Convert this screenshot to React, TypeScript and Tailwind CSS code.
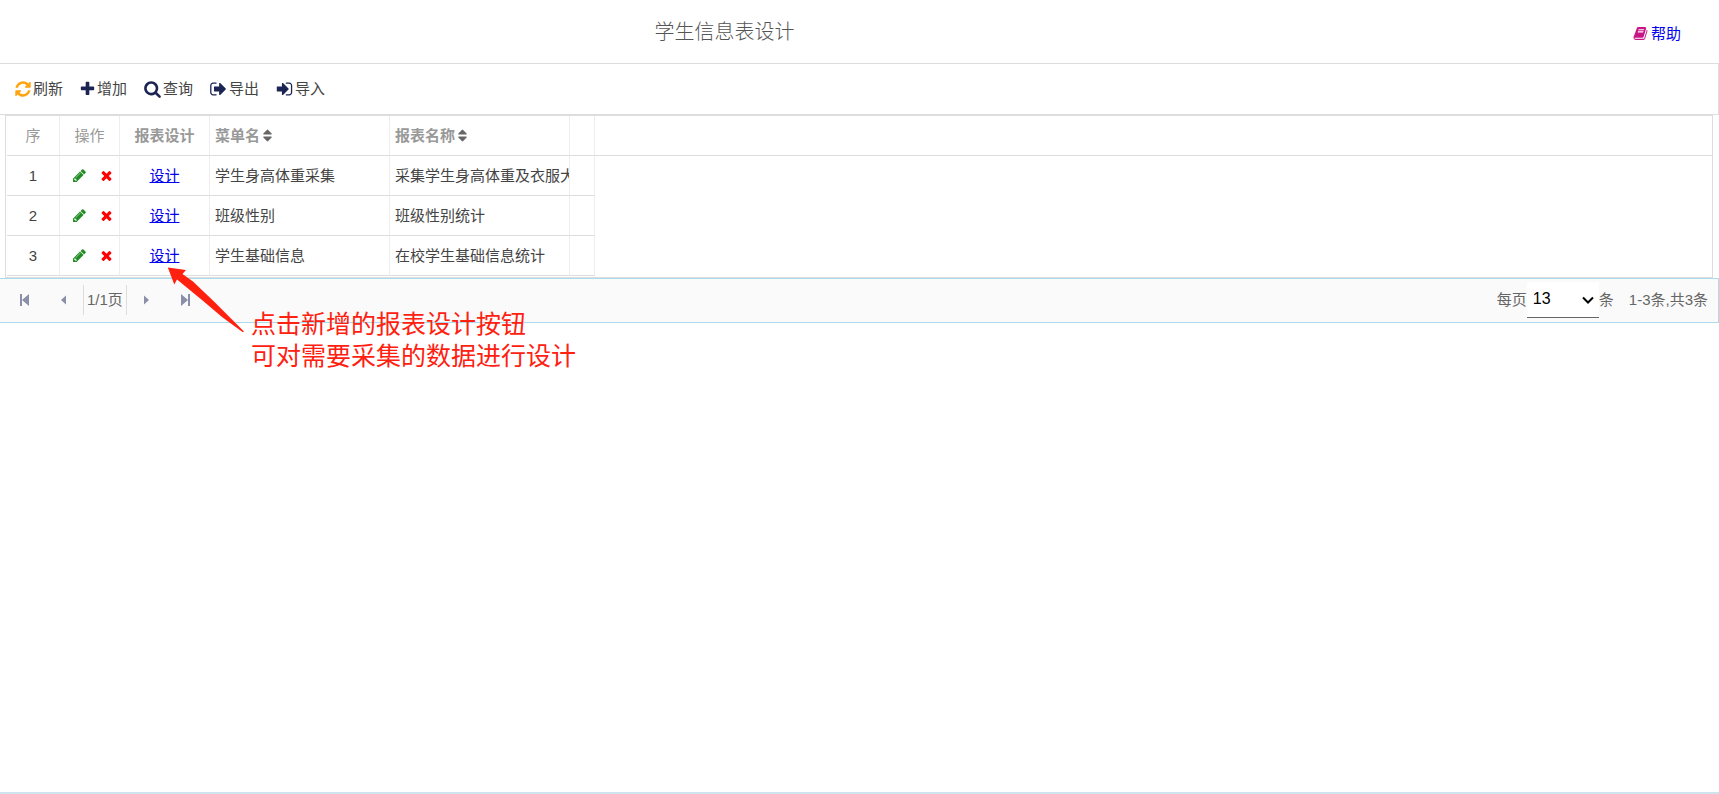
import React, { useState } from 'react';

const icons = {
  refresh:
    'M1639 1056q0 5-1 7-64 268-268 434.5t-478 166.5q-146 0-282.5-55t-243.5-157l-129 129q-19 19-45 19t-45-19-19-45v-448q0-26 19-45t45-19h448q26 0 45 19t19 45-19 45l-137 137q71 66 161 102t187 36q134 0 250-65t186-179q11-17 53-117 8-23 30-23h192q13 0 22.5 9.5t9.5 22.5zm25-800v448q0 26-19 45t-45 19h-448q-26 0-45-19t-19-45 19-45l138-138q-148-137-349-137-134 0-250 65t-186 179q-11 17-53 117-8 23-30 23h-199q-13 0-22.5-9.5t-9.5-22.5v-7q65-268 270-434.5t480-166.5q146 0 284 55.5t245 156.5l130-129q19-19 45-19t45 19 19 45z',
  plus: 'M1600 736v192q0 40-28 68t-68 28h-416v416q0 40-28 68t-68 28h-192q-40 0-68-28t-28-68v-416h-416q-40 0-68-28t-28-68v-192q0-40 28-68t68-28h416v-416q0-40 28-68t68-28h192q40 0 68 28t28 68v416h416q40 0 68 28t28 68z',
  search:
    'M1216 832q0-185-131.5-316.5t-316.5-131.5-316.5 131.5-131.5 316.5 131.5 316.5 316.5 131.5 316.5-131.5 131.5-316.5zm512 832q0 52-38 90t-90 38q-54 0-90-38l-343-342q-179 124-399 124-143 0-273.5-55.5t-225-150-150-225-55.5-273.5 55.5-273.5 150-225 225-150 273.5-55.5 273.5 55.5 225 150 150 225 55.5 273.5q0 220-124 399l343 343q37 37 37 90z',
  signOut:
    'M704 1440q0 4 1 20t.5 26.5-3 23.5-10 19.5-20.5 6.5h-320q-119 0-203.5-84.5t-84.5-203.5v-704q0-119 84.5-203.5t203.5-84.5h320q13 0 22.5 9.5t9.5 22.5q0 4 1 20t.5 26.5-3 23.5-10 19.5-20.5 6.5h-320q-66 0-113 47t-47 113v704q0 66 47 113t113 47h312l11.5 1 11.5 3 8 5.5 7 9 2 13.5zm928-544q0 26-19 45l-544 544q-19 19-45 19t-45-19-19-45v-288h-448q-26 0-45-19t-19-45v-384q0-26 19-45t45-19h448v-288q0-26 19-45t45-19 45 19l544 544q19 19 19 45z',
  signIn:
    'M1312 896q0 26-19 45l-544 544q-19 19-45 19t-45-19-19-45v-288h-448q-26 0-45-19t-19-45v-384q0-26 19-45t45-19h448v-288q0-26 19-45t45-19 45 19l544 544q19 19 19 45zm352-352v704q0 119-84.5 203.5t-203.5 84.5h-320q-13 0-22.5-9.5t-9.5-22.5q0-4-1-20t-.5-26.5 3-23.5 10-19.5 20.5-6.5h320q66 0 113-47t47-113v-704q0-66-47-113t-113-47h-312l-11.5-1-11.5-3-8-5.5-7-9-2-13.5q0-4-1-20t-.5-26.5 3-23.5 10-19.5 20.5-6.5h320q119 0 203.5 84.5t84.5 203.5z',
  pencil:
    'M491 1536l91-91-235-235-91 91v107h128v128h107zm523-928q0-22-22-22-10 0-17 7l-542 542q-7 7-7 17 0 22 22 22 10 0 17-7l542-542q7-7 7-17zm-54-192l416 416-832 832h-416v-416zm683 96q0 53-37 90l-166 166-416-416 166-165q36-38 90-38 53 0 91 38l235 234q37 39 37 91z',
  times:
    'M1490 1322q0 40-28 68l-136 136q-28 28-68 28t-68-28l-294-294-294 294q-28 28-68 28t-68-28l-136-136q-28-28-28-68t28-68l294-294-294-294q-28-28-28-68t28-68l136-136q28-28 68-28t68 28l294 294 294-294q28-28 68-28t68 28l136 136q28 28 28 68t-28 68l-294 294 294 294q28 28 28 68z',
  sort: 'M1408 1088q0 26-19 45l-448 448q-19 19-45 19t-45-19l-448-448q-19-19-19-45t19-45 45-19h896q26 0 45 19t19 45zm0-384q0 26-19 45t-45 19h-896q-26 0-45-19t-19-45 19-45l448-448q19-19 45-19t45 19l448 448q19 19 19 45z',
  book: 'M1703 478q40 57 18 129l-275 906q-19 64-76.5 107.5t-122.5 43.5h-923q-77 0-148.5-53.5t-99.5-131.5q-24-67-2-127 0-4 3-27t4-37q1-8-3-21.5t-3-19.5q2-11 8-21t16.5-23.5 16.5-23.5q23-38 45-91.5t30-91.5q3-10 .5-30t-.5-28q3-11 17-28t17-23q21-36 42-92t25-90q1-9-2.5-32t.5-28q4-13 22-30.5t22-22.5q19-26 42.5-84.5t27.5-96.5q1-8-3-25.5t-2-26.5q2-8 9-18t18-23 17-21q8-12 16.5-30.5t15-35 16-36 19.5-32 26.5-23.5 36-11.5 47.5 5.5l-1 3q38-9 51-9h761q74 0 114 56t18 130l-274 906q-36 119-71.5 153.5t-128.5 34.5h-869q-27 0-38 15-11 16-1 43 24 70 144 70h923q29 0 56-15.5t35-41.5l300-987q7-22 5-57 38 15 59 43zm-1064 2q-4 13 2 22.5t20 9.5h608q13 0 25.5-9.5t16.5-22.5l21-64q4-13-2-22.5t-20-9.5h-608q-13 0-25.5 9.5t-16.5 22.5zm-83 256q-4 13 2 22.5t20 9.5h608q13 0 25.5-9.5t16.5-22.5l21-64q4-13-2-22.5t-20-9.5h-608q-13 0-25.5 9.5t-16.5 22.5z',
};

type IconName = keyof typeof icons;

function Icon({ name, className = '' }: { name: IconName; className?: string }) {
  return (
    <svg viewBox="0 0 1792 1792" fill="currentColor" aria-hidden="true" className={`shrink-0 ${className}`}>
      <path d={icons[name]} />
    </svg>
  );
}

const tools: { name: string; icon: IconName; style: string }[] = [
  { name: '刷新', icon: 'refresh', style: 'w-[18px] text-[#ffa30f]' },
  { name: '增加', icon: 'plus', style: 'w-[17px] text-[#1c2454]' },
  { name: '查询', icon: 'search', style: 'w-[19px] text-[#1c2454]' },
  { name: '导出', icon: 'signOut', style: 'w-[19px] text-[#1c2454]' },
  { name: '导入', icon: 'signIn', style: 'w-[19px] text-[#1c2454]' },
];

const rows = [
  { id: 1, menu: '学生身高体重采集', report: '采集学生身高体重及衣服大' },
  { id: 2, menu: '班级性别', report: '班级性别统计' },
  { id: 3, menu: '学生基础信息', report: '在校学生基础信息统计' },
];

const cell = 'h-10 border-r border-b border-r-[#ededed] border-b-[#dddddd] p-0';

function PageButton({ label, d }: { label: string; d: string }) {
  return (
    <button type="button" aria-label={label} className="flex h-8 w-[39px] items-center justify-center text-[#8b90a9]">
      <svg viewBox="0 0 16 16" fill="currentColor" className="size-4">
        <path d={d} />
      </svg>
    </button>
  );
}

export default function App() {
  const [pageSize, setPageSize] = useState('13');

  return (
    <div className="relative flex min-h-screen flex-col border-b-2 border-[#cfe4ef] bg-white font-['Liberation_Sans','Noto_Sans_CJK_SC',sans-serif] text-[15px] leading-5 text-[#444444]">
      <header className="flex h-16 items-center border-b border-[#dddddd]">
        <h1 className="flex-1 text-center text-xl font-light text-[#555555]">学生信息表设计</h1>
        <div className="flex w-[270px] justify-end pt-1 pr-[38px]">
          <a href="#help" className="flex items-center gap-[3px] text-[#0000ee]">
            <Icon name="book" className="size-[15px] text-[#c71585]" />
            帮助
          </a>
        </div>
      </header>

      <div className="flex h-[51px] items-center gap-4 border-r border-b border-[#dddddd] px-[14px]">
        {tools.map((tool) => (
          <button key={tool.name} type="button" className="flex items-center gap-px">
            <Icon name={tool.icon} className={`h-[18px] ${tool.style}`} />
            {tool.name}
          </button>
        ))}
      </div>

      <div className="mr-[6px] ml-[5px] border border-[#dddddd] pb-px pl-px">
        <table className="w-full table-fixed border-separate border-spacing-0">
          <colgroup>
            <col className="w-[53px]" />
            <col className="w-[60px]" />
            <col className="w-[90px]" />
            <col className="w-[180px]" />
            <col className="w-[180px]" />
            <col className="w-[25px]" />
            <col />
          </colgroup>
          <thead className="text-[#999999]">
            <tr>
              <th className={`${cell} font-normal`}>序</th>
              <th className={`${cell} font-normal`}>操作</th>
              <th className={`${cell} font-bold`}>报表设计</th>
              <th className={`${cell} font-bold`}>
                <button type="button" className="flex items-center pl-[5px]">
                  菜单名
                  <Icon name="sort" className="size-[15px] text-[#666666]" />
                </button>
              </th>
              <th className={`${cell} font-bold`}>
                <button type="button" className="flex items-center pl-[5px]">
                  报表名称
                  <Icon name="sort" className="size-[15px] text-[#666666]" />
                </button>
              </th>
              <th className={cell} />
              <th className="border-b border-[#dddddd] p-0" />
            </tr>
          </thead>
          <tbody>
            {rows.map((row) => (
              <tr key={row.id}>
                <td className={`${cell} text-center`}>{row.id}</td>
                <td className={cell}>
                  <div className="flex items-center justify-center gap-3 pl-[6px]">
                    <button type="button" aria-label="编辑">
                      <Icon name="pencil" className="size-[15px] text-[#228b22]" />
                    </button>
                    <button type="button" aria-label="删除">
                      <Icon name="times" className="size-[15px] text-[#ff0000]" />
                    </button>
                  </div>
                </td>
                <td className={`${cell} text-center`}>
                  <a href="#design" className="text-[#0000ee] underline">
                    设计
                  </a>
                </td>
                <td className={cell}>
                  <div className="overflow-hidden pl-[5px] whitespace-nowrap">{row.menu}</div>
                </td>
                <td className={cell}>
                  <div className="overflow-hidden pl-[5px] whitespace-nowrap">{row.report}</div>
                </td>
                <td className={cell} />
                <td className="p-0" />
              </tr>
            ))}
          </tbody>
        </table>
      </div>

      <footer className="flex h-[45px] items-center justify-between border-y border-r border-[#aadcee] bg-[#fafafa] pr-[10px] pb-[2px] pl-[5px] text-[#666666]">
        <nav className="flex items-center">
          <PageButton label="首页" d="M3 2h2v12H3zM12 2v12L5 8z" />
          <PageButton label="上一页" d="M10 3.500v9L5 8z" />
          <span className="border-x border-[#dddddd] px-[3px] py-[5px]">1/1页</span>
          <PageButton label="下一页" d="M6 3.500v9L11 8z" />
          <PageButton label="末页" d="M11 2h2v12h-2zM4 2v12l7-6z" />
        </nav>
        <div className="flex items-center">
          <label htmlFor="page-size">每页</label>
          <div className="grid items-center">
            <select
              id="page-size"
              value={pageSize}
              onChange={(e) => setPageSize(e.target.value)}
              className="col-start-1 row-start-1 h-9 w-[72px] appearance-none border-b border-[#666666] bg-white pl-[6px] text-base text-black"
            >
              <option>13</option>
              <option>20</option>
              <option>50</option>
            </select>
            <svg
              viewBox="0 0 12 8"
              className="pointer-events-none col-start-1 row-start-1 mr-[5px] h-2 w-3 justify-self-end"
              fill="none"
              stroke="#000000"
              strokeWidth="2"
              aria-hidden="true"
            >
              <path d="M1 1.500 6 6.500l5-5" />
            </svg>
          </div>
          <span>条</span>
          <span className="ml-[15px]">1-3条,共3条</span>
        </div>
      </footer>

      {/* hint pointing at the last design link */}
      <svg viewBox="0 0 78 66" className="absolute top-[267px] left-[167px] h-[66px] w-[78px]" fill="#ff2010" aria-hidden="true">
        <path d="M.8.600 19 3 15.500 7 26 14.500 48 35.500 77 64.500 75.500 65 55 50 35 33 10 12.500 7.300 17.500z" />
      </svg>
      <p className="absolute top-[308px] left-[251px] text-[25px] leading-8 text-[#ff2010]">
        点击新增的报表设计按钮
        <br />
        可对需要采集的数据进行设计
      </p>
    </div>
  );
}
